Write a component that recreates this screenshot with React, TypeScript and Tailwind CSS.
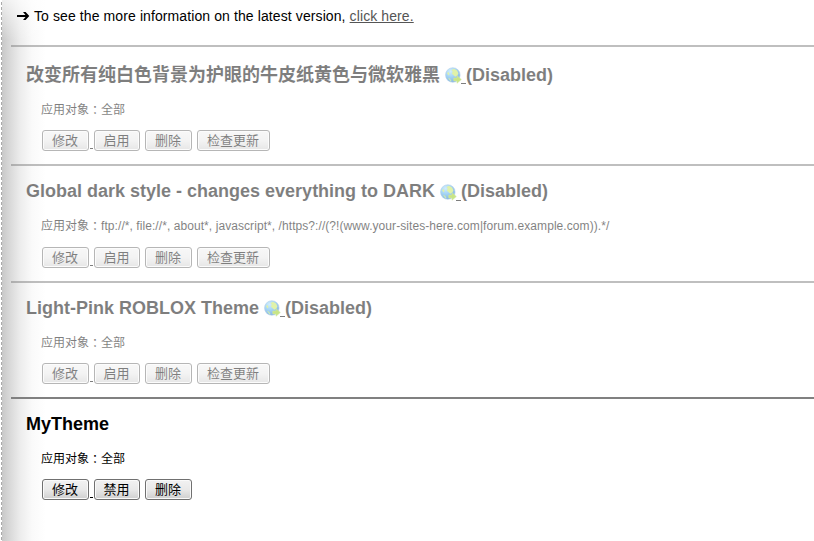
import React from "react";

type Style = {
  name: string;
  target: string;
  enabled: boolean;
  updatable: boolean;
  height: string;
  titleWidth: string;
  titlePad: string;
  lift: string;
  targetMargin: string;
};

const styles: Style[] = [
  { name: "改变所有纯白色背景为护眼的牛皮纸黄色与微软雅黑", target: "全部", enabled: false, updatable: true, height: "h-[119px]", titleWidth: "w-[415px]", titlePad: "pt-[17px]", lift: "-mt-px", targetMargin: "mt-[13px] mb-[11px]" },
  { name: "Global dark style - changes everything to DARK", target: "ftp://*, file://*, about*, javascript*, /https?://(?!(www.your-sites-here.com|forum.example.com)).*/", enabled: false, updatable: true, height: "h-[117px]", titleWidth: "w-[410px]", titlePad: "pt-[15px]", lift: "-mt-[2px]", targetMargin: "mt-[12px] mb-[12px]" },
  { name: "Light-Pink ROBLOX Theme", target: "全部", enabled: false, updatable: true, height: "h-[116px]", titleWidth: "w-[234px]", titlePad: "pt-[14px]", lift: "-mt-px", targetMargin: "mt-[13px] mb-[11px]" },
  { name: "MyTheme", target: "全部", enabled: true, updatable: false, height: "h-[144px]", titleWidth: "w-[84px]", titlePad: "pt-[14px]", lift: "-mt-px", targetMargin: "mt-[13px] mb-[11px]" },
];

function Globe() {
  return (
    <svg width="17" height="17" viewBox="0 0 17 17" className="mt-[3px] -mr-px shrink-0">
      <defs>
        <radialGradient id="sea" cx="35%" cy="25%" r="75%">
          <stop offset="0" stopColor="#a5dcfb" />
          <stop offset=".5" stopColor="#4fadec" />
          <stop offset="1" stopColor="#1670c4" />
        </radialGradient>
      </defs>
      <circle cx="7.8" cy="8" r="7.3" fill="url(#sea)" stroke="#6fa8d8" strokeWidth=".6" />
      <path d="M6.5 3 9 1.8l3 1.6 1.4 2.8-1 2.4-2.2 1.2L8.400 8 6.800 6.600l1-1.800zM2 6l1.500-1 1 2-1 1.600z" fill="#c3e655" />
      <path d="M3 11l2 .5L6.500 14l-1 .6z" fill="#98d470" />
      <path d="M8.800 11h3.200V8.800l4.300 3.700-4.300 3.700v-2.300H8.800z" fill="#93cc10" stroke="#a8d63c" strokeWidth=".6" />
    </svg>
  );
}

function Button({ label, width }: { label: string; width: string }) {
  return (
    <button className={`${width} flex h-[21px] shrink-0 items-center justify-center whitespace-nowrap rounded-[3px] border border-[#707070] bg-linear-to-b from-[#f2f2f2] from-0% via-[#e9e9e9] via-50% to-[#cfcfcf] pr-px text-[13px] leading-[19px] shadow-[inset_0_0_0_1px_#fafafa]`}>
      {label}
    </button>
  );
}

function Entry({ item }: { item: Style }) {
  return (
    <section className={`${item.height} ${item.enabled ? "" : "opacity-50"} border-t-2 border-[#808080]`}>
      <div className={`${item.titlePad} pl-[15px]`}>
        <h2 className="flex h-[24px] items-start text-[18px] leading-[24px] font-bold whitespace-nowrap">
          <span className={`${item.titleWidth} ${item.lift} shrink-0`}>{item.name}</span>
          {!item.enabled && (
            <>
              <span className="w-[4px]" />
              <Globe />
              <span className="mt-[19px] h-px w-[5px] bg-black" />
              <span className={item.lift}>(Disabled)</span>
            </>
          )}
        </h2>
      </div>
      <p className={`${item.targetMargin} flex h-[18px] pl-[30px] text-[12px] leading-[18px] whitespace-nowrap`}>
        <span>应用对象</span>
        <span className="font-['Noto_Sans_CJK_TC',sans-serif]">：</span>
        <span className={item.target === "全部" ? "" : "tracking-[0.07px]"}>{item.target}</span>
      </p>
      <div className="flex pl-[31px]">
        <Button label="修改" width="w-[47px]" />
        <span className="mt-[18px] ml-px mr-px h-px w-[3px] bg-black" />
        <Button label={item.enabled ? "禁用" : "启用"} width="w-[46px]" />
        <span className="w-[5px]" />
        <Button label="删除" width="w-[47px]" />
        <span className="w-[5px]" />
        {item.updatable && <Button label="检查更新" width="w-[73px]" />}
      </div>
    </section>
  );
}

export default function App() {
  return (
    <div className="flex h-[541px] w-[814px] overflow-hidden bg-white font-['Liberation_Sans','Noto_Sans_CJK_SC',sans-serif] text-black">
      <div className="ml-px w-px shrink-0 bg-[repeating-linear-gradient(to_bottom,#fff_0_2px,#aaa_2px_5px)]" />
      <main className="min-w-0 grow bg-[linear-gradient(to_bottom,#ffffffb0,#ffffff00_40px),linear-gradient(to_right,#c8c8c8_0px,#d7d7d7_7px,#ececec_18px,#fafafa_30px,#fff_44px)] pl-[9px]">
        <div className="flex h-[45px] items-start pt-[7px] pl-[5px] text-[14px] leading-[18px] whitespace-nowrap">
          <svg width="14" height="10" viewBox="0 0 14 10" className="mt-[4px] mr-[4px]">
            <path d="M1 4h8.500L7 1h2.600L13.300 5 9.600 9H7l2.500-3H1z" fill="#000" />
          </svg>
          <span className="tracking-[0.1px]">To see the more information on the latest version, <a href="#latest" className="text-[#555] underline">click here.</a></span>
        </div>
        {styles.map((item) => <Entry key={item.name} item={item} />)}
      </main>
    </div>
  );
}
